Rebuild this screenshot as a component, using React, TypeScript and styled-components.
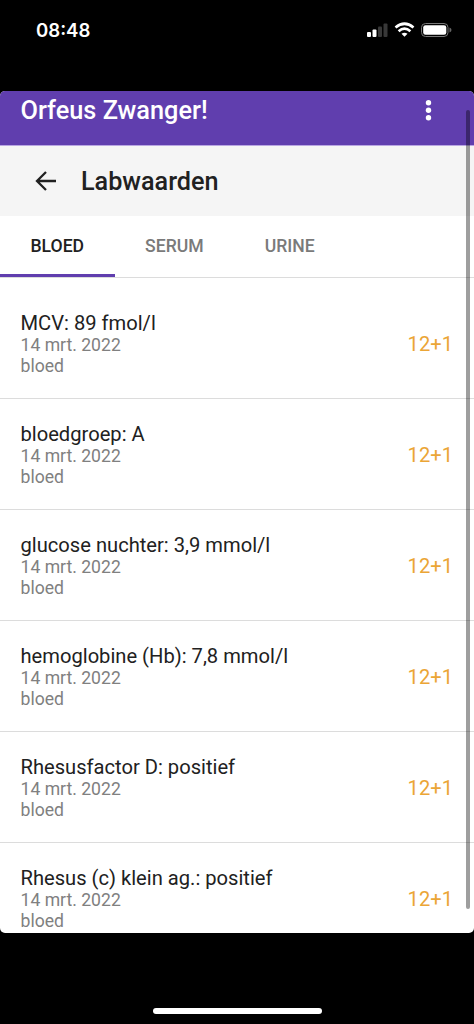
import React from 'react';
import styled, { createGlobalStyle } from 'styled-components';

const Global = createGlobalStyle`
  * { box-sizing: border-box; }
  html, body { margin: 0; background: #000; }
  body { font-family: Roboto, sans-serif; overflow: hidden; }
`;

const Phone = styled.div`
  width: 474px;
  height: 1024px;
  background: #000;
  display: flex;
  flex-direction: column;
  overflow: hidden;
`;

const StatusBar = styled.header`
  flex: 0 0 91px;
  display: flex;
  justify-content: space-between;
  align-items: flex-start;
  padding: 19px 22px 0 36px;
  color: #fff;
`;

const Clock = styled.span`
  font: 600 18.6px/23px Inter, sans-serif;
`;

const StatusIcons = styled.svg`
  display: block;
  margin-top: 2px;
`;

const WebView = styled.main`
  position: relative;
  flex: 0 0 842px;
  background: #fff;
  border-radius: 5px;
  overflow: hidden;
`;

const AppBar = styled.div`
  height: 54px;
  display: flex;
  justify-content: space-between;
  padding: 5px 40px 0 20.5px;
  background: #603eae;
  color: #fff;
`;

const AppTitle = styled.h1`
  margin: 0;
  font-size: 25.3px;
  line-height: 29px;
  font-weight: 500;
`;

const MenuIcon = styled.svg`
  margin-top: 2px;
`;

const PageHeader = styled.div`
  height: 71px;
  display: flex;
  align-items: center;
  gap: 25px;
  padding-left: 35px;
  border-top: 1px solid #b9a6e2;
  background: #f5f5f5;
  color: #212121;
`;

const PageTitle = styled.h2`
  margin: 0;
  font-size: 25.2px;
  line-height: 30px;
  padding-top: 1px;
  font-weight: 500;
`;

const Tabs = styled.nav`
  height: 62px;
  display: flex;
  border-bottom: 1px solid #dcdcdc;
`;

const Tab = styled.button<{ $active?: boolean }>`
  height: 61px;
  border: 0;
  border-bottom: 3px solid ${p => (p.$active ? '#603eae' : 'transparent')};
  padding: 2px 30.5px 0;
  background: none;
  color: ${p => (p.$active ? '#212121' : '#7a7a7a')};
  font: 500 17.6px/20px Roboto, sans-serif;
`;

const List = styled.ul`
  list-style: none;
  margin: 0;
  padding: 10px 0 0;
`;

const Row = styled.li`
  height: 111px;
  display: flex;
  align-items: center;
  justify-content: space-between;
  padding: 2px 21px 0 20.5px;
  border-bottom: 1px solid #dcdcdc;
`;

const Name = styled.div`
  font-size: 20.15px;
  line-height: 24px;
  color: #212121;
`;

const Detail = styled.div`
  font-size: 17.6px;
  line-height: 21.5px;
  color: #808080;
`;

const Week = styled.span`
  font-size: 20.15px;
  line-height: 24px;
  color: #eba536;
`;

const ScrollThumb = styled.div`
  position: absolute;
  right: 4px;
  top: 19px;
  width: 4px;
  height: 799px;
  border-radius: 2px;
  background: rgba(0, 0, 0, 0.38);
`;

const HomeArea = styled.footer`
  flex: 1;
  display: flex;
  justify-content: center;
  align-items: flex-end;
  padding-bottom: 10px;
`;

const HomeIndicator = styled.div`
  width: 169px;
  height: 6px;
  border-radius: 3px;
  background: #fff;
`;

const results = [
  'MCV: 89 fmol/l',
  'bloedgroep: A',
  'glucose nuchter: 3,9 mmol/l',
  'hemoglobine (Hb): 7,8 mmol/l',
  'Rhesusfactor D: positief',
  'Rhesus (c) klein ag.: positief',
];

export default function App() {
  return (
    <Phone>
      <Global />
      <StatusBar>
        <Clock>08:48</Clock>
        <StatusIcons width="86" height="18" viewBox="0 0 86 18" fill="#fff">
          <rect x="1" y="11" width="4" height="5" rx="1" />
          <rect x="6.5" y="8.5" width="4" height="7.5" rx="1" />
          <rect x="12" y="5.5" width="4" height="10.5" rx="1" opacity=".22" />
          <rect x="17.5" y="2.5" width="4" height="13.5" rx="1" opacity=".22" />
          <g fill="none" stroke="#fff" strokeWidth="2.7">
            <path d="M29.500 6.500Q38.500 -1 47.500 6.500" />
            <path d="M32.600 10.200Q38.500 5.200 44.400 10.200" />
          </g>
          <path d="M35.500 12.800Q38.500 10.500 41.500 12.800L38.500 15.800Z" />
          <rect x="55.500" y="2.500" width="26.500" height="13" rx="4" fill="none" stroke="#777" />
          <rect x="57.200" y="4.200" width="23.100" height="9.600" rx="2.300" />
          <path d="M83.500 6.500Q85.500 7.200 85.500 9T83.500 11.500Z" fill="#666" />
        </StatusIcons>
      </StatusBar>
      <WebView>
        <AppBar>
          <AppTitle>Orfeus Zwanger!</AppTitle>
          <MenuIcon width="11" height="24" viewBox="0 0 11 24" fill="#fff">
            <circle cx="5.5" cy="4.800" r="2.700" />
            <circle cx="5.5" cy="12.300" r="2.700" />
            <circle cx="5.5" cy="19.800" r="2.700" />
          </MenuIcon>
        </AppBar>
        <PageHeader>
          <svg width="21" height="20" viewBox="0 0 21 20" fill="none" stroke="#212121" strokeWidth="2.300">
            <path d="M21 10H2M11 1L2 10L11 19" />
          </svg>
          <PageTitle>Labwaarden</PageTitle>
        </PageHeader>
        <Tabs>
          <Tab $active>BLOED</Tab>
          <Tab>SERUM</Tab>
          <Tab>URINE</Tab>
        </Tabs>
        <List>
          {results.map(name => (
            <Row key={name}>
              <div>
                <Name>{name}</Name>
                <Detail>14 mrt. 2022</Detail>
                <Detail>bloed</Detail>
              </div>
              <Week>12+1</Week>
            </Row>
          ))}
        </List>
        <ScrollThumb />
      </WebView>
      <HomeArea>
        <HomeIndicator />
      </HomeArea>
    </Phone>
  );
}
